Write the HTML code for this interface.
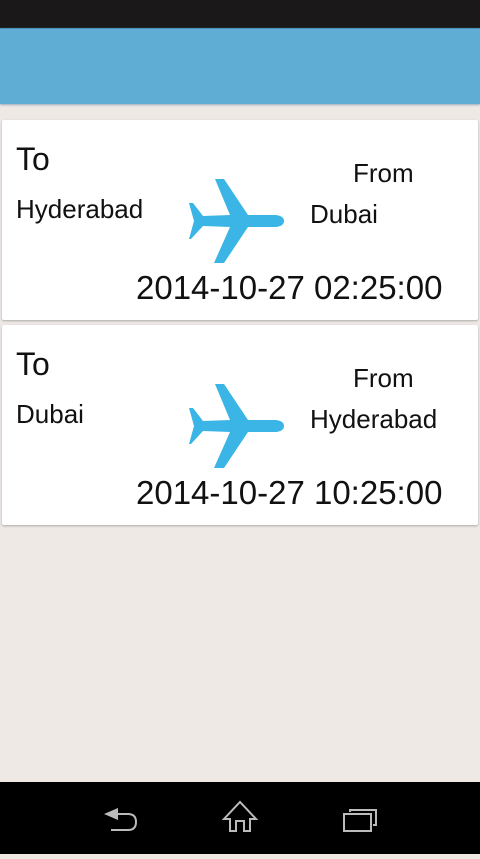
<!DOCTYPE html>
<html><head><style>
*{margin:0;padding:0}
body{width:480px;height:854px;background:#eee9e5;position:relative;overflow:hidden;font-family:"Liberation Sans",sans-serif;color:#111}
.sb{position:absolute;left:0;top:0;width:480px;height:28px;background:#1a1818}
.ab{position:absolute;left:0;top:28px;width:480px;height:75px;background:#5fadd5;border-top:1px solid #4a90b8;box-shadow:0 1px 2px #9ab}
.card{position:absolute;left:2px;width:476px;height:200px;background:#fff;border-radius:2px;box-shadow:0 1px 2px #aaa}
.t{position:absolute;white-space:nowrap;line-height:1}
.nav{position:absolute;left:0;top:782px;width:480px;height:72px;background:#000}
</style></head><body>
<div class="sb"></div><div class="ab"></div>

<div class="card" style="top:120px">
<div class="t" style="left:14px;top:23px;font-size:32px">To</div>
<div class="t" style="left:14px;top:76px;font-size:26px">Hyderabad</div>
<div class="t" style="left:351px;top:40px;font-size:26px">From</div>
<div class="t" style="left:308px;top:81px;font-size:26px">Dubai</div>
<div class="t" style="left:134px;top:151px;font-size:33px">2014-10-27 02:25:00</div>
<svg style="position:absolute;left:0;top:0" width="476" height="200"><path fill="#3ab5e5" transform="translate(-2,-120)" d="M215,179 L224,179 L248,215 L276,215 Q284,216 284,221 Q284,226 276,227 L248,227 L224,263 L214,263 L230,227 L203,226 L191,239 L189,239 L194,221 L189,203 L193,203 L203,216 L230,215 Z"/></svg>
</div>

<div class="card" style="top:325px">
<div class="t" style="left:14px;top:23px;font-size:32px">To</div>
<div class="t" style="left:14px;top:76px;font-size:26px">Dubai</div>
<div class="t" style="left:351px;top:40px;font-size:26px">From</div>
<div class="t" style="left:308px;top:81px;font-size:26px">Hyderabad</div>
<div class="t" style="left:134px;top:151px;font-size:33px">2014-10-27 10:25:00</div>
<svg style="position:absolute;left:0;top:0" width="476" height="200"><path fill="#3ab5e5" transform="translate(-2,-120)" d="M215,179 L224,179 L248,215 L276,215 Q284,216 284,221 Q284,226 276,227 L248,227 L224,263 L214,263 L230,227 L203,226 L191,239 L189,239 L194,221 L189,203 L193,203 L203,216 L230,215 Z"/></svg>
</div>

<div class="nav">
<svg width="480" height="72" fill="none" stroke="#bbb" stroke-width="2">
<g transform="translate(0,-13)">
<path d="M111,61 H128 Q136,61 136,53 Q136,45 128,45 H112"/>
<path fill="#bbb" stroke="none" d="M104,45 L118,39 L118,51 Z"/>
<path d="M230,62 V50 H224 L240,33 L256,50 H250 V62 H244 V52 H236 V62 Z"/>
<rect x="344" y="45" width="27" height="17"/>
<path d="M350,43 V41 H376 V56 H373"/>
</g>
</svg>
</div>
</body></html>
